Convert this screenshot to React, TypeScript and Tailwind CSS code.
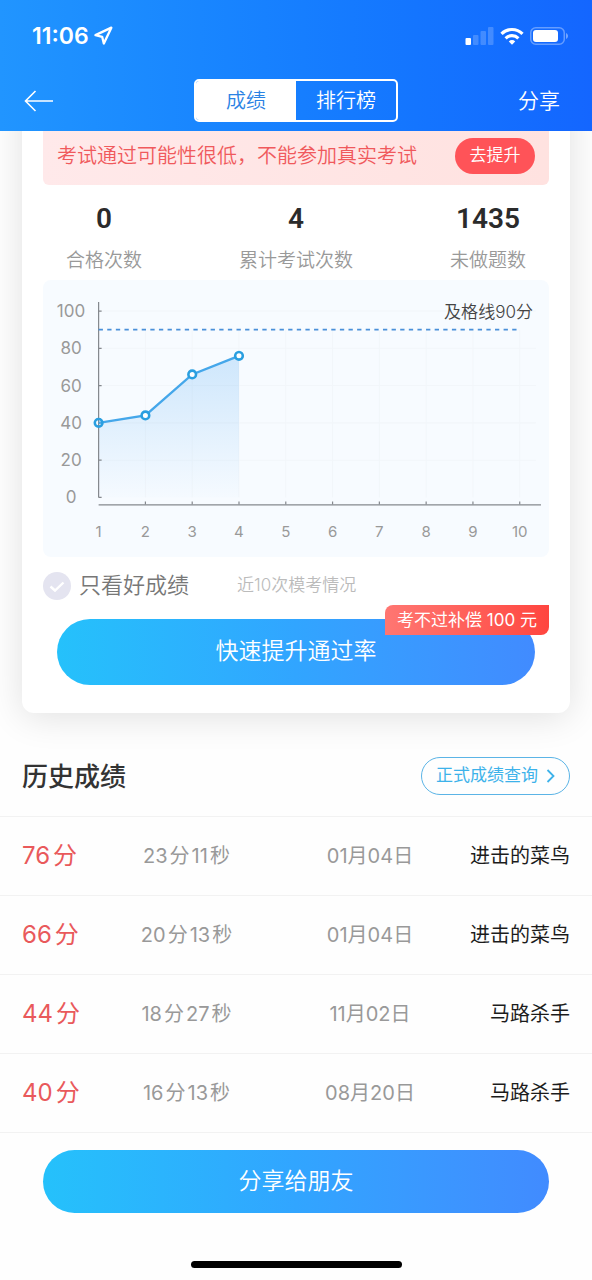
import { useState } from 'react';
import { Navigation } from 'lucide-react';

interface ExamRecord {
  score: number;
  minutes: number;
  seconds: number;
  date: string;
  title: string;
}

const STATS = [
  { label: '合格次数', value: '0' },
  { label: '累计考试次数', value: '4' },
  { label: '未做题数', value: '1435' },
];

const RECORDS: ExamRecord[] = [
  { score: 76, minutes: 23, seconds: 11, date: '01月04日', title: '进击的菜鸟' },
  { score: 66, minutes: 20, seconds: 13, date: '01月04日', title: '进击的菜鸟' },
  { score: 44, minutes: 18, seconds: 27, date: '11月02日', title: '马路杀手' },
  { score: 40, minutes: 16, seconds: 13, date: '08月20日', title: '马路杀手' },
];

const PASS_SCORE = 90;
const Y_TICKS = [100, 80, 60, 40, 20, 0];
const X_TICKS = [1, 2, 3, 4, 5, 6, 7, 8, 9, 10];

const xAt = (n: number) => 55.5 + (n - 1) * 46.7;
const yAt = (score: number) => 217 - score * 1.86;

function StatusBar() {
  return (
    <div className="flex h-[70px] items-center justify-between pt-[2px] pl-8 pr-6">
      <div className="flex items-center gap-1 text-[23px] leading-7 font-semibold">
        <span>11:06</span>
        <Navigation size={20} strokeWidth={2.8} />
      </div>
      <div className="flex items-center gap-[6px]">
        <svg width="29" height="18" viewBox="0 0 29 18" fill="#fff">
          <rect x="0.500" y="11" width="5.500" height="7" rx="1" />
          <rect x="8" y="8" width="5.500" height="10" rx="1" opacity="0.2" />
          <rect x="15.500" y="4" width="5.500" height="14" rx="1" opacity="0.2" />
          <rect x="23" y="0" width="5.500" height="18" rx="1" opacity="0.2" />
        </svg>
        <svg width="24" height="18" viewBox="0 0 24 18" fill="none" stroke="#fff" strokeWidth="3.200">
          <path d="M1.500 6.800a15 15 0 0 1 21 0" />
          <path d="M5.600 11.300a9.200 9.200 0 0 1 12.800 0" />
          <path d="M12 17.800l-3.200-3.400a4.600 4.600 0 0 1 6.400 0z" fill="#fff" stroke="none" />
        </svg>
        <svg width="38" height="18" viewBox="0 0 38 18" fill="none">
          <rect x="0.750" y="0.750" width="33.500" height="16.500" rx="5" stroke="#fff" strokeOpacity="0.35" strokeWidth="1.500" />
          <rect x="3" y="3" width="25" height="12" rx="3" fill="#fff" />
          <path d="M36 6v6c1.200-.5 2-1.600 2-3s-.8-2.500-2-3z" fill="#fff" fillOpacity="0.4" />
        </svg>
      </div>
    </div>
  );
}

function NavBar({ tab, onTab }: { tab: string; onTab: (tab: string) => void }) {
  return (
    <nav className="grid h-[61px] grid-cols-[1fr_auto_1fr] items-center px-6">
      <button aria-label="返回" className="justify-self-start">
        <svg width="30" height="22" viewBox="0 0 30 22" fill="none" stroke="#fff" strokeWidth="1.600">
          <path d="M29 11H1.500M11.500 1L1.500 11l10 10" />
        </svg>
      </button>
      <div className="flex h-[43px] overflow-hidden rounded-[5px] border-2 border-white text-[20px]">
        {['成绩', '排行榜'].map(name => (
          <button
            key={name}
            onClick={() => onTab(name)}
            className={tab === name ? 'w-[100px] bg-white text-[#2a82e4]' : 'w-[100px] text-white'}
          >
            {name}
          </button>
        ))}
      </div>
      <button className="justify-self-end pr-2 text-[21px]">分享</button>
    </nav>
  );
}

function ScoreChart({ scores }: { scores: number[] }) {
  const points = scores.map((s, i) => `${xAt(i + 1)},${yAt(s)}`).join(' ');
  const area = `${xAt(1)},217 ${points} ${xAt(scores.length)},217`;

  return (
    <svg viewBox="0 0 505 276" className="block w-full rounded-lg bg-[#f7fbff]" role="img" aria-label="模考成绩">
      <defs>
        <linearGradient id="score-fill" x1="0" y1="0" x2="0" y2="1">
          <stop offset="0" stopColor="#2b95f0" stopOpacity="0.2" />
          <stop offset="1" stopColor="#2b95f0" stopOpacity="0.01" />
        </linearGradient>
      </defs>

      {/* grid */}
      <g stroke="#f2f6fa">
        {Y_TICKS.slice(0, -1).map(t => <path key={t} d={`M55.500 ${yAt(t)}H492`} />)}
        {X_TICKS.map(t => <path key={t} d={`M${xAt(t)} 50V217`} />)}
      </g>

      <polygon points={area} fill="url(#score-fill)" />

      {/* axes */}
      <g stroke="#85898e" strokeWidth="1.200">
        <path d="M55.500 22V217M55.500 224.500H497" />
        {Y_TICKS.map(t => <path key={t} d={`M55.500 ${yAt(t)}h3`} />)}
        {X_TICKS.slice(1).map(t => <path key={t} d={`M${xAt(t)} 224v-3`} />)}
      </g>

      <path d={`M55.500 ${yAt(PASS_SCORE)}H${xAt(10)}`} stroke="#4a90d9" strokeWidth="1.800" strokeDasharray="4.300 4.300" />
      <polyline points={points} fill="none" stroke="#45a7ea" strokeWidth="2.400" />
      {scores.map((s, i) => (
        <circle key={i} cx={xAt(i + 1)} cy={yAt(s)} r="3.800" fill={i === 0 ? 'none' : '#fff'} stroke="#2a9fe0" strokeWidth="2.600" />
      ))}

      <g fill="#999" fontSize="17" fontWeight="400" textAnchor="middle">
        {Y_TICKS.map(t => <text key={t} x="28" y={yAt(t) + 6}>{t}</text>)}
      </g>
      <g fill="#999" fontSize="15" fontWeight="400" textAnchor="middle">
        {X_TICKS.map(t => <text key={t} x={xAt(t)} y="257">{t}</text>)}
      </g>
      <text x="489" y="38" fill="#444" fontSize="17" textAnchor="end">及格线{PASS_SCORE}分</text>
    </svg>
  );
}

function HistoryTable({ records }: { records: ExamRecord[] }) {
  return (
    <table className="w-full table-fixed text-[20px] text-[#999]">
      <tbody>
        {records.map((r, i) => (
          <tr key={i} className="h-[79px] border-b border-[#f2f2f2]">
            <td className="w-[16%] pl-[22px] text-[24px] whitespace-nowrap text-[#e9595b]">
              {r.score}<span className="ml-[3px]">分</span>
            </td>
            <td className="w-[31%] text-center">
              {r.minutes}<span className="mx-[2px]">分</span>{r.seconds}<span className="ml-[2px]">秒</span>
            </td>
            <td className="w-[31%] text-center">{r.date}</td>
            <td className="w-[22%] pr-[22px] text-right whitespace-nowrap text-[#1c1c1c]">{r.title}</td>
          </tr>
        ))}
      </tbody>
    </table>
  );
}

export default function App() {
  const [tab, setTab] = useState('成绩');
  const [goodOnly, setGoodOnly] = useState(false);
  const scores = RECORDS.map(r => r.score).reverse();

  return (
    <div className="min-h-screen bg-[#fefefe] font-['Inter','Noto_Sans_CJK_SC',sans-serif]">
      <header className="relative z-10 bg-linear-to-r from-[#2195ff] to-[#1466ff] font-[350] text-white">
        <StatusBar />
        <NavBar tab={tab} onTab={setTab} />
      </header>

      <main>
        {/* Summary card, its top slides under the header */}
        <section className="mx-[22px] -mt-10 rounded-xl bg-white px-[21px] pt-10 pb-7 font-[350] shadow-[0_4px_36px_rgba(0,0,0,0.12)]">
          <div className="flex h-[54px] items-center justify-between rounded-b-md bg-linear-to-r from-[#ffe9ea] to-[#ffe2e0] pr-[14px] pb-1 pl-[14px]">
            <p className="text-[20px] whitespace-nowrap text-[#f0595c]">考试通过可能性很低，不能参加真实考试</p>
            <button className="h-9 w-20 rounded-full bg-[#ff5358] text-[17px] text-white">去提升</button>
          </div>

          <dl className="flex h-[95px] justify-between px-[23px] pt-4 text-center">
            {STATS.map(s => (
              <div key={s.label} className="flex flex-col-reverse justify-end gap-[10px]">
                <dt className="text-[19px] leading-7 text-[#999]">{s.label}</dt>
                <dd className="font-['Roboto',sans-serif] text-[28px] leading-9 font-semibold text-[#2b2b2b]">{s.value}</dd>
              </div>
            ))}
          </dl>

          <ScoreChart scores={scores} />

          <div className="flex h-[62px] items-center pb-1">
            <label className="flex items-center gap-2 text-[22px] text-[#777]">
              <span className="relative flex size-7">
                <input
                  type="checkbox"
                  checked={goodOnly}
                  onChange={e => setGoodOnly(e.target.checked)}
                  className="size-7 appearance-none rounded-full bg-[#e4e4f0] checked:bg-[#2aa8f8]"
                />
                <svg viewBox="0 0 28 28" className="pointer-events-none absolute inset-0" fill="none" stroke="#fff" strokeWidth="2.400">
                  <path d="M7.500 14.500l4.500 4 8.500-8" />
                </svg>
              </span>
              只看好成绩
            </label>
            <span className="ml-12 text-[17px] text-[#bbb]">近10次模考情况</span>
          </div>

          <div className="relative px-[14px]">
            <button className="h-[66px] w-full rounded-full bg-linear-to-r from-[#25c1fb] via-[#31a5ff] to-[#418bff] text-[23px] text-white">
              快速提升通过率
            </button>
            <span className="absolute -top-[14px] right-0 rounded-tl-lg rounded-br-lg bg-linear-to-r from-[#ff7672] to-[#ff453f] px-3 text-[17px] leading-[30px] font-normal text-white">
              考不过补偿 100 元
            </span>
          </div>
        </section>

        <section>
          <div className="flex h-[104px] items-center justify-between border-b border-[#f2f2f2] px-[22px] pt-6">
            <h2 className="text-[26px] font-medium text-[#333]">历史成绩</h2>
            <a href="#official" className="flex h-[38px] items-center gap-2 rounded-full border border-[#5bb4e6] px-[14px] text-[17px] text-[#3db2ea]">
              正式成绩查询
              <svg width="9" height="14" viewBox="0 0 9 14" fill="none" stroke="currentColor" strokeWidth="1.800">
                <path d="M1.500 1l6 6-6 6" />
              </svg>
            </a>
          </div>
          <HistoryTable records={RECORDS} />
        </section>
      </main>

      <footer className="px-[43px] pt-[17px] pb-3">
        <button className="h-[63px] w-full rounded-full bg-linear-to-r from-[#25c1fb] via-[#31a5ff] to-[#418bff] text-[23px] font-[350] text-white">
          分享给朋友
        </button>
        <div className="mx-auto mt-12 h-[7px] w-[211px] rounded-full bg-black" />
      </footer>
    </div>
  );
}
